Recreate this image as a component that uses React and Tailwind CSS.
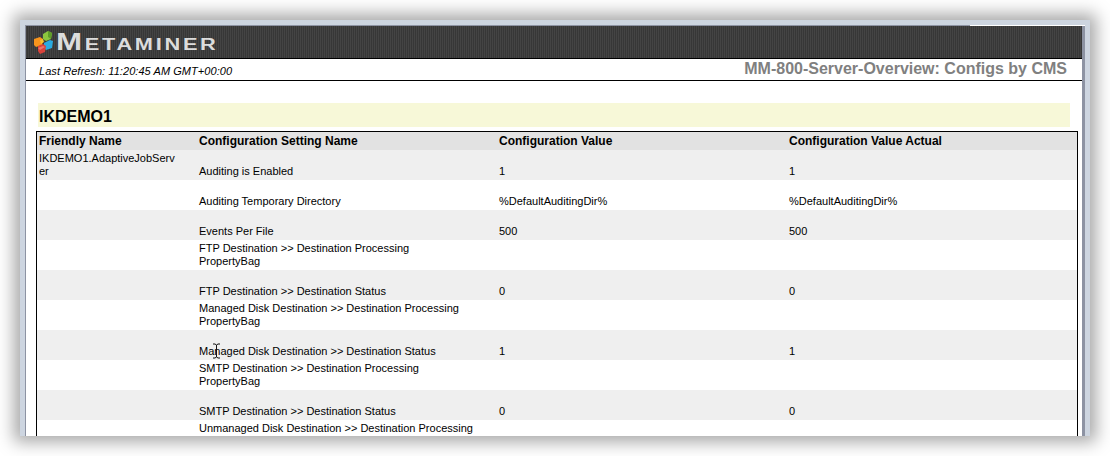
const rows = [
  { name: ['Auditing is Enabled'], value: '1', actual: '1' },
  { name: ['Auditing Temporary Directory'], value: '%DefaultAuditingDir%', actual: '%DefaultAuditingDir%' },
  { name: ['Events Per File'], value: '500', actual: '500' },
  { name: ['FTP Destination >> Destination Processing', 'PropertyBag'], value: '', actual: '' },
  { name: ['FTP Destination >> Destination Status'], value: '0', actual: '0' },
  { name: ['Managed Disk Destination >> Destination Processing', 'PropertyBag'], value: '', actual: '' },
  { name: ['Managed Disk Destination >> Destination Status'], value: '1', actual: '1' },
  { name: ['SMTP Destination >> Destination Processing', 'PropertyBag'], value: '', actual: '' },
  { name: ['SMTP Destination >> Destination Status'], value: '0', actual: '0' },
  { name: ['Unmanaged Disk Destination >> Destination Processing'], value: '', actual: '', top: true },
];

const Logo = () => (
  <svg width="21" height="24" viewBox="0 0 21 24" className="shrink-0">
    <path d="M10 4l5-3 4 2-1 6-5 2-3-2z" fill="#8cc63f" />
    <path d="M15 1l4 2-1 6-3-2z" fill="#5f9e2a" />
    <path d="M1 9l6-2 3 2-1 6-6 2-2-2z" fill="#f7941d" />
    <path d="M7 10l3-1 1 3-3 2z" fill="#f9c22e" />
    <path d="M11 13l6-3 3 1-1 7-6 2-2-2z" fill="#29abe2" />
    <path d="M5 16l5-2 3 2-1 6-5 2-2-3z" fill="#d9423a" />
    <path d="M5 18l5-2 2 1-5 3z" fill="#f0736a" />
  </svg>
);

const Row = ({ row, index }) => {
  const shaded = index % 2 === 0;
  const atTop = row.name.length > 1 || row.top;
  return (
    <div className={`grid h-[30px] grid-cols-[160px_300px_290px_1fr] text-[11px] leading-[13px] ${shaded ? 'bg-[#efefef]' : 'bg-white'}`}>
      <div className="pt-[2px] pl-[2px]">
        {index === 0 && <span className="block w-[140px] break-all">IKDEMO1.AdaptiveJobServer</span>}
      </div>
      <div className={`flex pl-[2px] ${atTop ? 'items-start pt-[2px]' : 'items-end pb-[2px]'}`}>
        <span>
          {row.name.map((line) => (
            <span key={line} className="block">{line}</span>
          ))}
        </span>
      </div>
      <div className="flex items-end pb-[2px] pl-[2px]">{row.value}</div>
      <div className="flex items-end pb-[2px] pl-[2px]">{row.actual}</div>
    </div>
  );
};

const App = () => {
  return (
    <div className="h-[456px] w-[1110px] overflow-hidden bg-white pt-5 pl-5 font-['Liberation_Sans',Arial,sans-serif] text-black">
      <div className="relative h-[416px] w-[1070px] overflow-hidden border-x-[5px] border-t-[5px] border-b-0 border-[#cdd5e0] bg-white shadow-[0_0_16px_6px_rgba(0,0,0,0.35)]">
        <div className="h-full border-t border-r-[3px] border-l border-[#8d93a3] bg-white">
          <div className="flex h-[32px] items-center bg-[#3d3d3d] bg-[repeating-linear-gradient(90deg,#444_0,#444_1px,#373737_1px,#373737_2px)] pl-[7px]">
            <Logo />
            <span className="ml-[2px] inline-block origin-left scale-x-[1.36] text-[23px] font-bold tracking-[2px] text-[#dcdcdc] [font-variant:small-caps]">Metaminer</span>
          </div>
          <div className="flex h-[23px] items-center justify-between border-y border-black pr-[15px] pl-[13px]">
            <span className="pt-[4px] text-[11px] tracking-[0.06px] italic">Last Refresh: 11:20:45 AM GMT+00:00</span>
            <span className="pb-[2px] text-[16px] leading-[14px] font-bold text-[#808080]">MM-800-Server-Overview: Configs by CMS</span>
          </div>
          <div className="pt-[22px] pr-[4px] pl-[10px]">
            <div className="mr-[8px] ml-[2px] flex h-[24px] items-center bg-[#f7f8d8] pt-[4px] pl-[1px] text-[16px] font-bold">IKDEMO1</div>
            <div className="mt-[4px] h-[400px] border-x border-t border-black">
              <div className="grid h-[18px] grid-cols-[160px_300px_290px_1fr] items-center bg-[#e2e2e2] text-[12px] font-bold">
                <div className="pl-[2px]">Friendly Name</div>
                <div className="pl-[2px]">Configuration Setting Name</div>
                <div className="pl-[2px]">Configuration Value</div>
                <div className="pl-[2px]">Configuration Value Actual</div>
              </div>
              {rows.map((row, i) => (
                <Row key={row.name[0]} row={row} index={i} />
              ))}
            </div>
          </div>
        </div>
        {/* white strip on the top edge, right side */}
        <div className="absolute top-0 right-0 h-px w-[115px] bg-white" />
        {/* mouse cursor over the table */}
        <svg width="9" height="16" viewBox="0 0 9 16" className="absolute top-[318px] left-[187px]">
          <path d="M1 1h2l1.500 1L6 1h2M4.500 2v12M1 15h2l1.500-1L6 15h2" fill="none" stroke="#111" strokeWidth="1" />
        </svg>
      </div>
    </div>
  );
};

export default App;
